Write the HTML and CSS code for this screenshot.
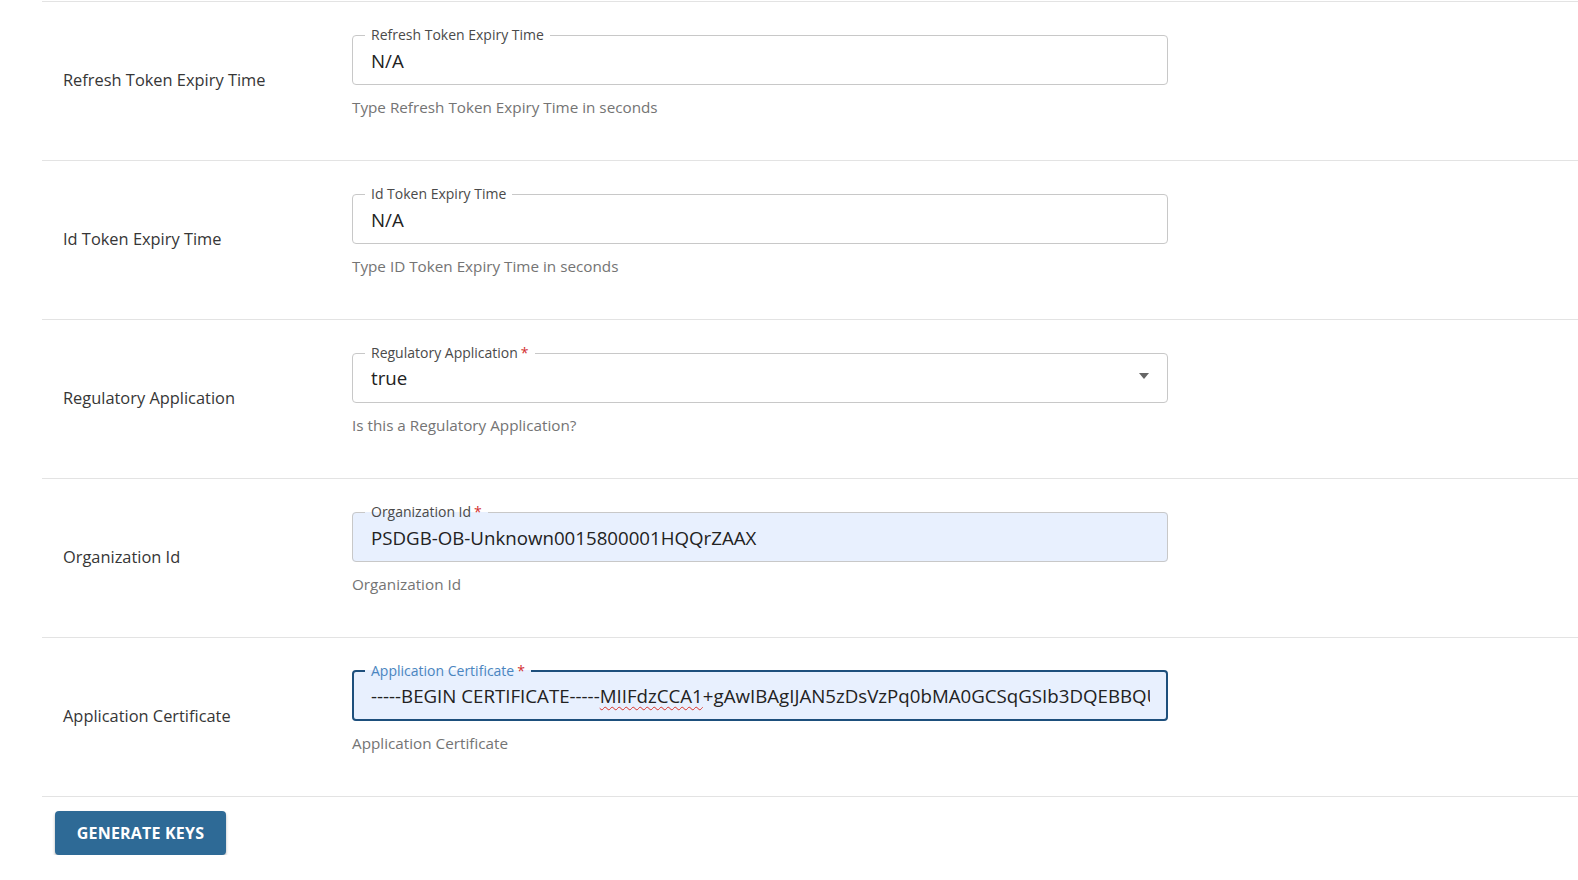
FILE: index.html
```html
<!DOCTYPE html>
<html lang="en">
<head>
<meta charset="utf-8">
<title>Application Keys</title>
<link rel="stylesheet" href="styles.css">
</head>
<body>
<div class="form">
  <div class="row">
    <div class="row-label">Refresh Token Expiry Time</div>
    <div class="field">
      <fieldset class="box">
        <legend>Refresh Token Expiry Time</legend>
        <div class="value">N/A</div>
      </fieldset>
      <div class="helper">Type Refresh Token Expiry Time in seconds</div>
    </div>
  </div>
  <div class="row">
    <div class="row-label">Id Token Expiry Time</div>
    <div class="field">
      <fieldset class="box">
        <legend>Id Token Expiry Time</legend>
        <div class="value">N/A</div>
      </fieldset>
      <div class="helper">Type ID Token Expiry Time in seconds</div>
    </div>
  </div>
  <div class="row">
    <div class="row-label">Regulatory Application</div>
    <div class="field">
      <fieldset class="box">
        <legend>Regulatory Application<span class="req">*</span></legend>
        <div class="value select">true<span class="caret"></span></div>
      </fieldset>
      <div class="helper">Is this a Regulatory Application?</div>
    </div>
  </div>
  <div class="row">
    <div class="row-label">Organization Id</div>
    <div class="field">
      <fieldset class="box filled">
        <legend>Organization Id<span class="req">*</span></legend>
        <div class="value">PSDGB-OB-Unknown0015800001HQQrZAAX</div>
      </fieldset>
      <div class="helper">Organization Id</div>
    </div>
  </div>
  <div class="row">
    <div class="row-label">Application Certificate</div>
    <div class="field">
      <fieldset class="box filled focused">
        <legend>Application Certificate<span class="req">*</span></legend>
        <div class="value clip"><div class="clip-inner">-----BEGIN CERTIFICATE-----<span class="spell">MIIFdzCCA1</span>+gAwIBAgIJAN5zDsVzPq0bMA0GCSqGSIb3DQEBBQUAMIGnMQswCQYDVQQGEwJHQjEQ</div></div>
      </fieldset>
      <div class="helper">Application Certificate</div>
    </div>
  </div>
  <div class="row last"></div>
  <div class="actions">
    <button class="btn" type="button">GENERATE KEYS</button>
  </div>
</div>
</body>
</html>
```

FILE: styles.css
```css
* { box-sizing: border-box; }
html, body {
  margin: 0;
  padding: 0;
  background: #ffffff;
  font-family: "Open Sans", "Noto Sans", sans-serif;
  color: #333333;
}
.form {
  padding: 1px 0 0 42px;
}
.row {
  display: grid;
  grid-template-columns: 310px 816px;
  height: 159px;
  border-top: 1px solid #e3e3e3;
}
.row.last {
  height: 0;
}
.row-label {
  align-self: center;
  padding-left: 21px;
  font-size: 16.4px;
  color: #363636;
  margin-top: -3px;
}
.field {
  padding-top: 22px;
}
.box {
  margin: 0;
  padding: 0 0 0 12px;
  border: 1px solid #c8c8c8;
  border-radius: 4px;
  height: 61px;
  min-width: 0;
  background: #ffffff;
}
.box legend {
  padding: 0 6px;
  font-size: 14px;
  line-height: 22px;
  color: #4a4a4a;
}
.req {
  color: #d32f2f;
  margin-left: 3px;
}
.box.filled {
  background: #e8f0fe;
}
.box.focused {
  border: 2px solid #1d4f7c;
  padding-left: 11px;
}
.box.focused legend {
  color: #4a85c0;
}
.value {
  padding: 0 18px 0 6px;
  height: 38px;
  display: flex;
  align-items: center;
  font-size: 18.7px;
  color: #222222;
  white-space: nowrap;
  margin-top: -5px;
}
.value.clip {
  display: block;
  padding-left: 6px;
  padding-right: 16px;
}
.clip-inner {
  overflow: hidden;
  line-height: 38px;
}
.value.select {
  justify-content: space-between;
  padding-right: 18px;
  margin-top: -6px;
}
.caret {
  width: 0;
  height: 0;
  border-left: 5px solid transparent;
  border-right: 5px solid transparent;
  border-top: 6px solid #666666;
  margin-top: -2px;
}
.spell {
  text-decoration: underline wavy #d93025;
  text-decoration-thickness: 1px;
  text-underline-offset: 3px;
}
.helper {
  margin-top: 12px;
  font-size: 15.25px;
  color: #747474;
}
.actions {
  padding: 14px 0 0 13px;
}
.btn {
  width: 171px;
  height: 44px;
  border: none;
  border-radius: 4px;
  background: #2e6a96;
  color: #ffffff;
  font-family: "Open Sans", "Noto Sans", sans-serif;
  font-weight: 700;
  font-size: 16px;
  letter-spacing: 0.2px;
  box-shadow: 0 2px 3px rgba(0, 0, 0, 0.3);
  cursor: pointer;
}
```
